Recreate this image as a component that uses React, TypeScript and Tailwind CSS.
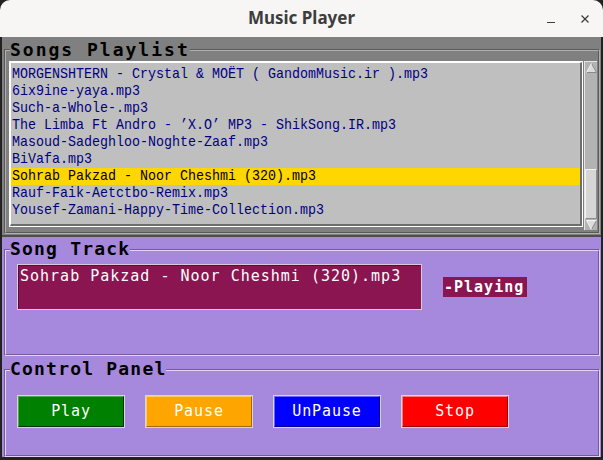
import React from "react";

const songs = [
  "MORGENSHTERN - Crystal & MOËT ( GandomMusic.ir ).mp3",
  "6ix9ine-yaya.mp3",
  "Such-a-Whole-.mp3",
  "The Limba Ft Andro - ’X.O’ MP3 - ShikSong.IR.mp3",
  "Masoud-Sadeghloo-Noghte-Zaaf.mp3",
  "BiVafa.mp3",
  "Sohrab Pakzad - Noor Cheshmi (320).mp3",
  "Rauf-Faik-Aetctbo-Remix.mp3",
  "Yousef-Zamani-Happy-Time-Collection.mp3",
];

const SELECTED = 6;

function TitleBar() {
  return (
    <div className="h-[37px] shrink-0 bg-[#f7f6f5] grid grid-cols-[1fr_auto_1fr] items-center">
      <div />
      <div className="text-[17px] leading-[20px] font-bold text-[#3d3d3d] [font-family:'Noto_Sans',sans-serif] pb-[1px]">
        Music Player
      </div>
      <div className="flex justify-end items-center gap-[24px] pr-[13px]">
        <svg width="10" height="10" viewBox="0 0 10 10">
          <line x1="1" y1="8.5" x2="9" y2="8.5" stroke="#3d3d3d" strokeWidth="1.2" />
        </svg>
        <svg width="10" height="10" viewBox="0 0 10 10">
          <line x1="1.5" y1="1.5" x2="8.5" y2="8.5" stroke="#3d3d3d" strokeWidth="1.2" />
          <line x1="8.5" y1="1.5" x2="1.5" y2="8.5" stroke="#3d3d3d" strokeWidth="1.2" />
        </svg>
      </div>
    </div>
  );
}

function Arrow({ up }: { up: boolean }) {
  return (
    <div className="h-[11px] flex items-center justify-center">
      <svg width="11" height="10" viewBox="0 0 11 10">
        {up ? (
          <>
            <polygon points="5.5,0.5 10.5,9.5 0.5,9.5" fill="#dcdcdc" />
            <polyline points="5.5,0.5 10.5,9.5 0.5,9.5" fill="none" stroke="#8a8a8a" strokeWidth="1" />
            <polyline points="0.5,9.5 5.5,0.5" fill="none" stroke="#f4f4f4" strokeWidth="1" />
          </>
        ) : (
          <>
            <polygon points="0.5,0.5 10.5,0.5 5.5,9.5" fill="#dcdcdc" />
            <polyline points="10.5,0.5 5.5,9.5" fill="none" stroke="#8a8a8a" strokeWidth="1" />
            <polyline points="5.5,9.5 0.5,0.5 10.5,0.5" fill="none" stroke="#f4f4f4" strokeWidth="1" />
          </>
        )}
      </svg>
    </div>
  );
}

function Scrollbar() {
  return (
    <div className="w-[13px] h-[169px] bg-[#b3b3b3] border-l border-t border-[#e6e6e6] flex flex-col">
      <Arrow up />
      <div className="flex-1" />
      <div className="h-[50px] bg-[#d6d6d6] border-t border-l border-[#f2f2f2] border-b border-r border-b-[#8c8c8c] border-r-[#8c8c8c]" />
      <Arrow up={false} />
    </div>
  );
}

function Groove({
  dark,
  light,
  children,
}: {
  dark: string;
  light: string;
  children?: React.ReactNode;
}) {
  return (
    <div
      className="flex-1 flex border"
      style={{
        borderTopColor: dark,
        borderLeftColor: dark,
        borderBottomColor: light,
        borderRightColor: light,
      }}
    >
      <div
        className="flex-1 flex flex-col border"
        style={{
          borderTopColor: light,
          borderLeftColor: light,
          borderBottomColor: dark,
          borderRightColor: dark,
        }}
      >
        {children}
      </div>
    </div>
  );
}

const labelFont = "[font-family:'DejaVu_Sans_Mono',monospace] font-bold text-[18px] leading-[18px] text-black";

export default function App() {
  return (
    <div className="w-[603px] h-[460px] bg-[#222222] overflow-hidden">
      <div className="w-full h-full rounded-t-[10px] overflow-hidden flex flex-col">
        <TitleBar />
        <div className="flex-1 flex flex-col px-[2px] pb-[3px] bg-[#222222]">
          {/* Songs Playlist */}
          <div className="relative h-[200px] bg-[#808080] flex flex-col pt-[12px] pl-[2px] pr-[1px] pb-[1px] border-b-2 border-[#4e4e4e]">
            <div className={`absolute left-[8px] top-[4px] bg-[#808080] tracking-[2px] ${labelFont}`}>
              Songs Playlist
            </div>
            <Groove dark="#5a5a5a" light="#b0b0b0">
              <div className="flex items-start pt-[10px] pl-[3px] gap-[1px]">
                <div className="w-[574px] h-[166px] border border-white">
                  <div className="h-full bg-[#bfbfbf] border-t border-l border-white border-b-2 border-r-2 border-b-[#6e6e6e] border-r-[#6e6e6e] pt-[3px] overflow-hidden">
                    {songs.map((s, i) => (
                      <div
                        key={i}
                        className={`h-[17px] pl-[1px] leading-[17px] whitespace-nowrap text-[15px] [font-family:'Liberation_Mono',monospace] ${
                          i === SELECTED ? "bg-[#ffd700] text-black" : "text-[#000080]"
                        }`}
                      >
                        <span className="inline-block origin-left scale-x-[0.889]">{s}</span>
                      </div>
                    ))}
                  </div>
                </div>
                <Scrollbar />
              </div>
            </Groove>
          </div>

          {/* Song Track */}
          <div className="relative h-[120px] bg-[#a689dd] flex flex-col pt-[12px] pl-[2px] pr-[1px] pb-[1px]">
            <div className={`absolute left-[8px] top-[3px] bg-[#a689dd] tracking-[1.2px] ${labelFont}`}>
              Song Track
            </div>
            <Groove dark="#6f5c99" light="#ecd0fa">
              <div className="flex items-start pt-[13px] pl-[11px]">
                <div className="w-[405px] h-[46px] border border-[#dcc9d8]">
                  <div className="h-full bg-[#8a1550] border-t border-l border-[#5a0c34] pt-[3px] pl-[1px] text-white text-[15px] leading-[15px] tracking-[1px] whitespace-nowrap [font-family:'DejaVu_Sans_Mono',monospace]">
                    Sohrab Pakzad - Noor Cheshmi (320).mp3
                  </div>
                </div>
                <div className="ml-[21px] mt-[13px] w-[84px] h-[20px] bg-[#8a1550] pl-[1px] text-white font-bold text-[15px] leading-[20px] tracking-[1px] whitespace-nowrap [font-family:'DejaVu_Sans_Mono',monospace]">
                  -Playing
                </div>
              </div>
            </Groove>
          </div>

          {/* Control Panel */}
          <div className="relative flex-1 bg-[#a689dd] flex flex-col pt-[12px] pl-[2px] pr-[1px]">
            <div className={`absolute left-[8px] top-[3px] bg-[#a689dd] tracking-[1.2px] ${labelFont}`}>
              Control Panel
            </div>
            <Groove dark="#6f5c99" light="#ecd0fa">
              <div className="flex pt-[24px] pl-[11px] gap-[20px]">
                {[
                  { t: "Play", bg: "bg-[#008000]", hi: "border-[#4da64d]", lo: "border-b-[#003300] border-r-[#003300]" },
                  { t: "Pause", bg: "bg-[#ffa500]", hi: "border-[#ffc966]", lo: "border-b-[#a36a00] border-r-[#a36a00]" },
                  { t: "UnPause", bg: "bg-[#0000ff]", hi: "border-[#6666ff]", lo: "border-b-[#000099] border-r-[#000099]" },
                  { t: "Stop", bg: "bg-[#ff0000]", hi: "border-[#ff7777]", lo: "border-b-[#a30000] border-r-[#a30000]" },
                ].map((b) => (
                  <div key={b.t} className="w-[108px] h-[33px] border border-[#d6d6d6]">
                    <div
                      className={`h-full ${b.bg} border ${b.hi} ${b.lo} flex items-center justify-center pb-[1px] text-white text-[15px] leading-[15px] tracking-[0.9px] [font-family:'DejaVu_Sans_Mono',monospace]`}
                    >
                      {b.t}
                    </div>
                  </div>
                ))}
              </div>
            </Groove>
          </div>
        </div>
      </div>
    </div>
  );
}
